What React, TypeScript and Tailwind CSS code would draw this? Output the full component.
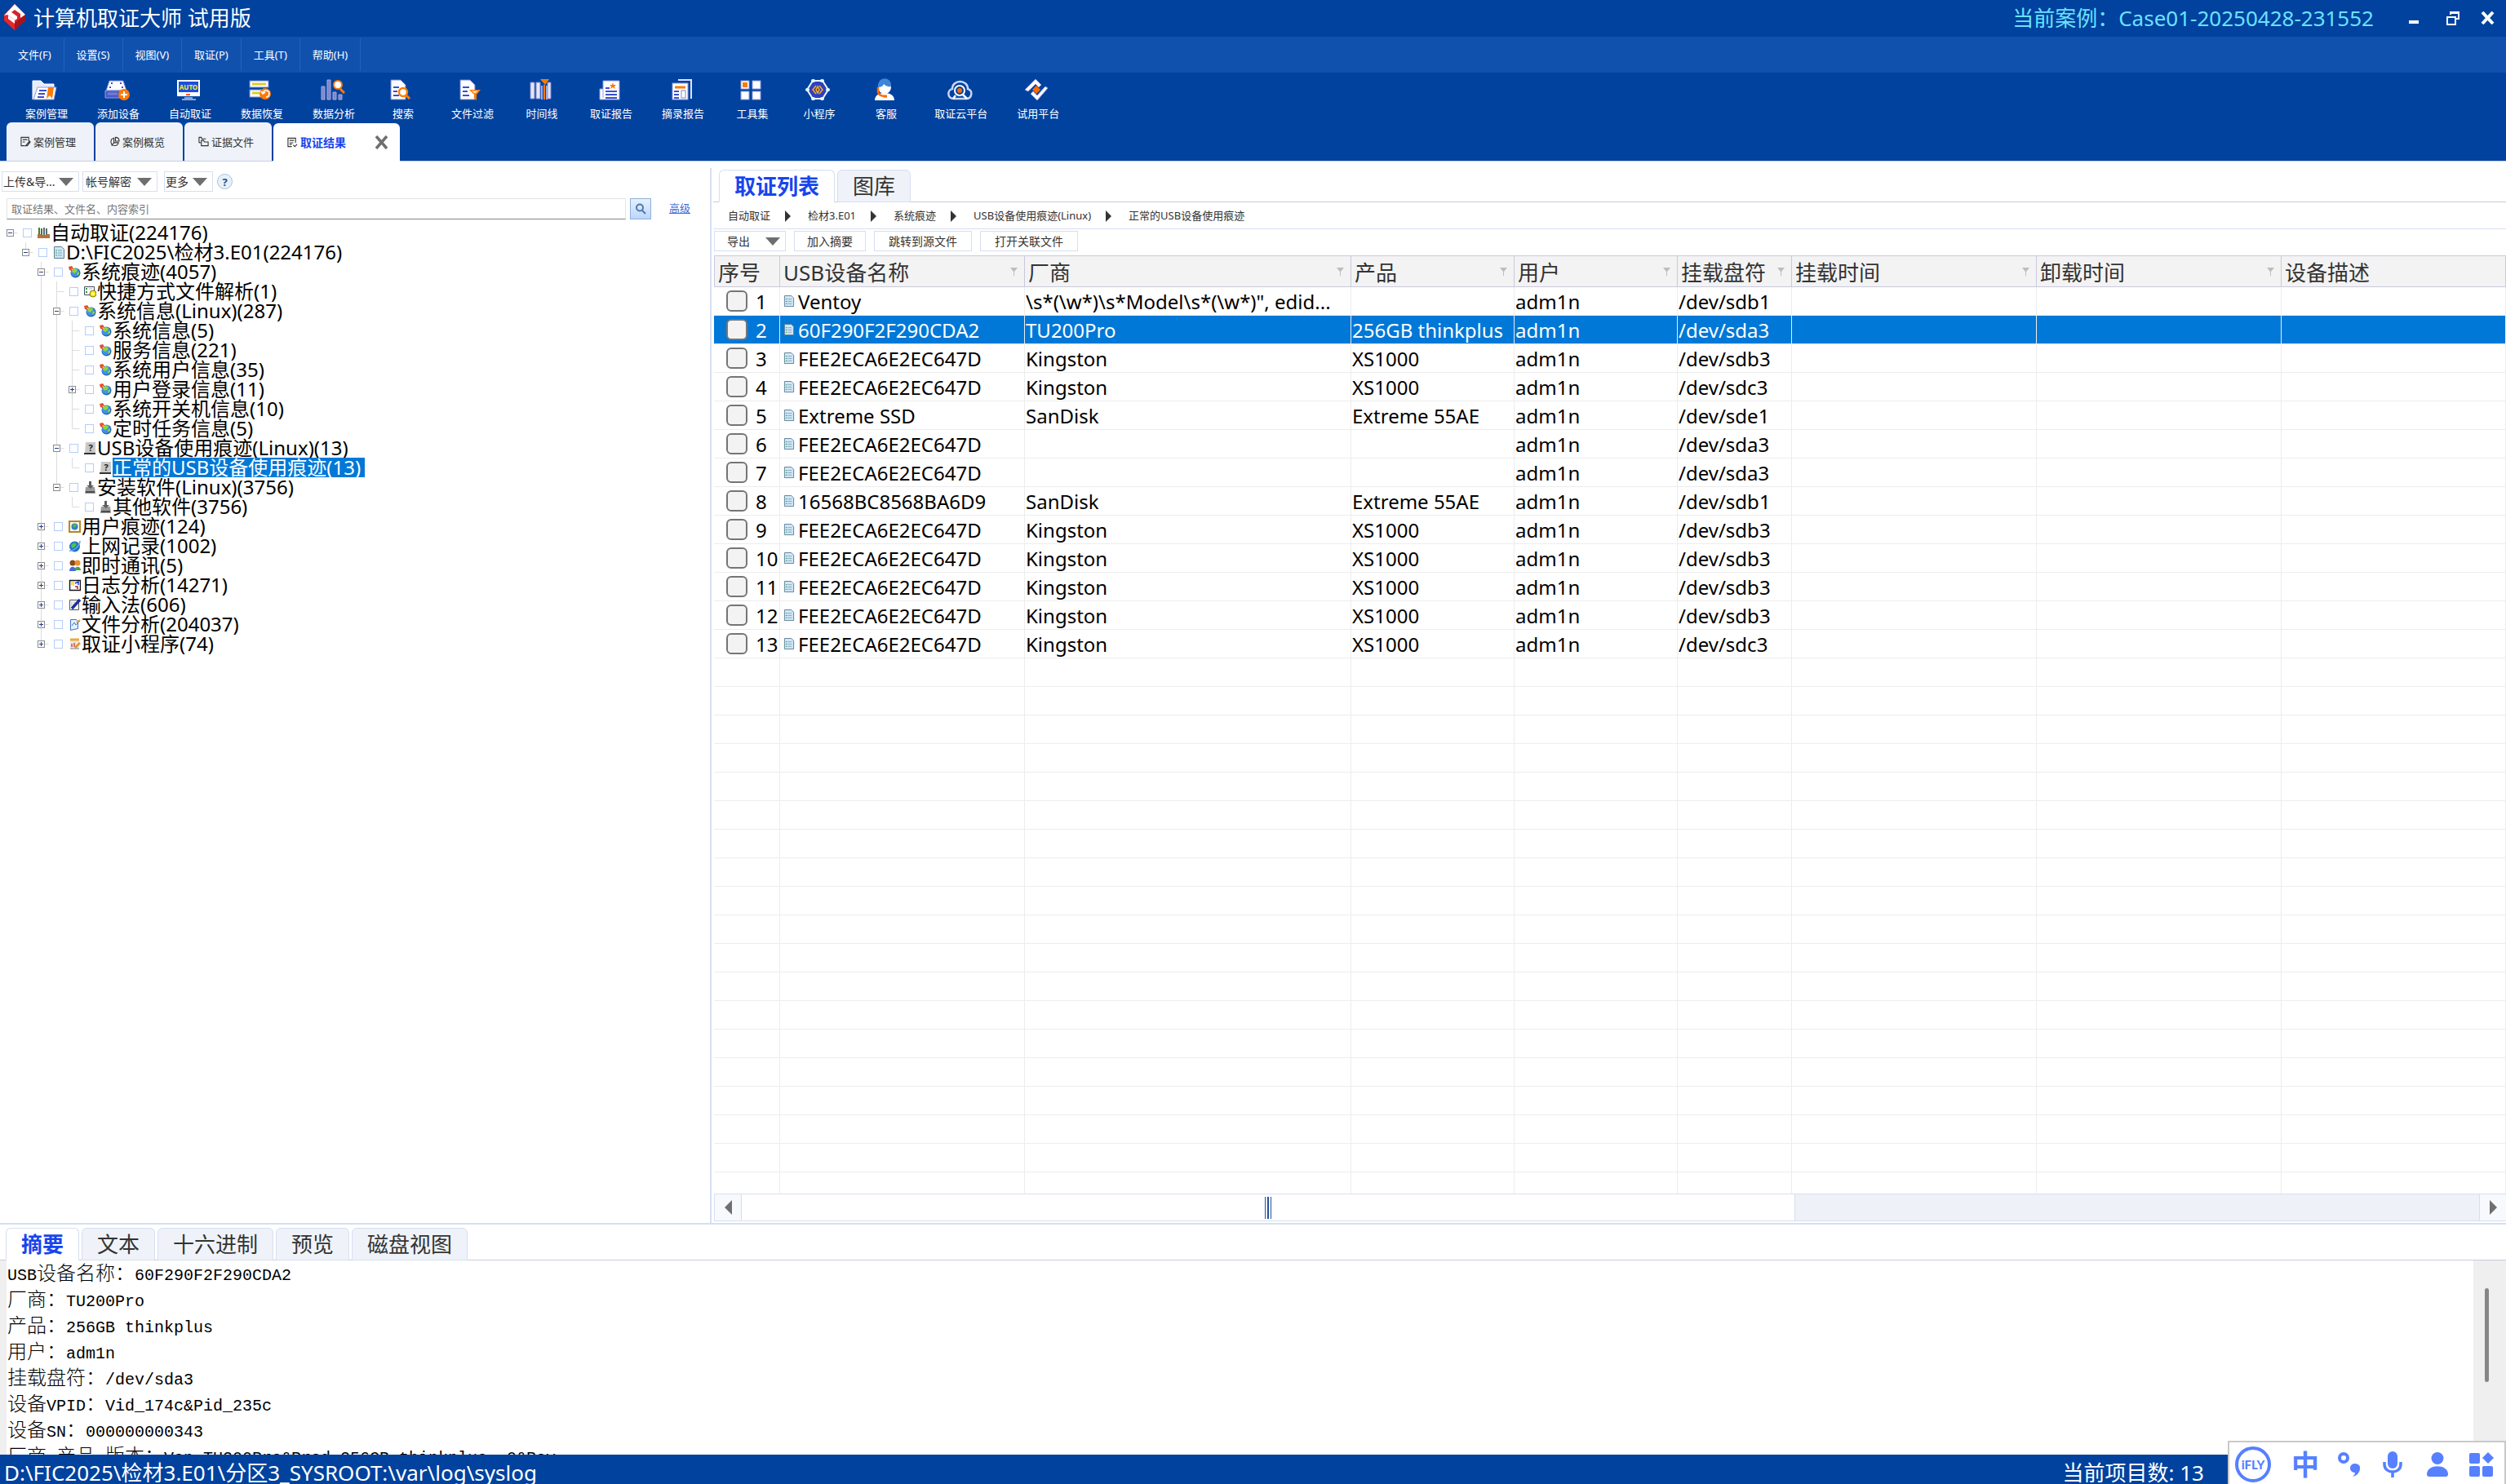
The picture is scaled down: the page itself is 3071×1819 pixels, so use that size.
import { Fragment } from 'react';
import type { ReactNode } from 'react';
import clsx from 'clsx';

const menus = ['文件(F)', '设置(S)', '视图(V)', '取证(P)', '工具(T)', '帮助(H)'];

/* ---------- toolbar ---------- */

const sheet = (
  <path d="M3 2h12l6 6v18H3z" fill="#fff" stroke="#6f7fd0" />
);

const toolIcons: Record<string, ReactNode> = {
  folder: (
    <>
      <path d="M1 26V3h10l4 4h12v5" fill="#e9ecfa" stroke="#fff" />
      <path d="M7 11h23l-3 15H2z" fill="#fff" stroke="#8f9be0" />
      <path d="M9 15h9M8 19h8M7 23h8" stroke="#3b4fd0" strokeWidth="2" />
      <path d="M20 11h7l-2 14-3-4-4 4z" fill="#ff7a00" />
    </>
  ),
  device: (
    <>
      <path d="M7 3h17l4 12H3z" fill="#fff" stroke="#6f7fd0" />
      <path d="M2 15h27v9H2z" fill="#4a5bc8" stroke="#8f9be0" />
      <path d="M5 19h12" stroke="#6f7fd0" strokeWidth="3" />
      <path d="M9 6h2M20 6h2M7 11h2M22 11h2" stroke="#3b4fd0" strokeWidth="2" />
      <circle cx="25" cy="20" r="7" fill="#ff7a00" />
      <path d="M25 16v8M21 20h8" stroke="#fff" strokeWidth="2" />
    </>
  ),
  auto: (
    <>
      <rect x="2" y="2" width="28" height="20" fill="#fff" />
      <rect x="4" y="4" width="24" height="13" fill="#1d4fe0" />
      <text x="16" y="14" textAnchor="middle" fontSize="8" fontWeight="700" fill="#f7ee2a">AUTO</text>
      <path d="M13 20h5" stroke="#ff5a00" strokeWidth="2" />
      <path d="M11 24h10M8 26h17" stroke="#b9c2f0" strokeWidth="1.4" />
    </>
  ),
  recover: (
    <>
      <rect x="3" y="3" width="23" height="8" fill="#fff" stroke="#6f7fd0" />
      <path d="M6 7h17" stroke="#d8cf2a" strokeWidth="3" />
      <rect x="3" y="14" width="15" height="9" fill="#fff" stroke="#6f7fd0" />
      <path d="M6 18h9" stroke="#d8cf2a" strokeWidth="3" />
      <circle cx="22" cy="19" r="7" fill="#ff7a00" />
      <path d="M19 18a4 4 0 1 1 4 5M17 16l2 3 3-2" fill="none" stroke="#fff" strokeWidth="1.6" />
    </>
  ),
  analyse: (
    <>
      <path d="M3 26V10h4v16zM10 26V2h4v24zM17 26v-9h4v9zM24 26v-6h4v6z" fill="#7e86cc" stroke="#a3a9e0" />
      <path d="M26 13l5 5" stroke="#ff7a00" strokeWidth="3" />
      <circle cx="23" cy="8" r="5" fill="#fff" stroke="#ff7a00" strokeWidth="2" />
    </>
  ),
  search: (
    <>
      {sheet}
      <path d="M6 11h7M6 16h5M6 21h7" stroke="#3b4fd0" strokeWidth="2" />
      <circle cx="18" cy="17" r="5" fill="#fff" stroke="#ff7a00" strokeWidth="2.4" />
      <path d="M22 21l4 4" stroke="#ff7a00" strokeWidth="3" />
    </>
  ),
  filter: (
    <>
      {sheet}
      <path d="M6 11h8M6 16h6M6 21h8" stroke="#3b4fd0" strokeWidth="2" />
      <path d="M14 14h14l-5 6v7l-3-2v-5z" fill="#ff7a00" />
      <path d="M17 15.500h8l-4 3z" fill="#ffe8d2" />
    </>
  ),
  timeline: (
    <>
      <path d="M4 5h5v20H4zM11 5h5v20h-5zM25 5h4v20h-4z" fill="#e4e6f6" stroke="#7e86cc" />
      <path d="M18 9v17M24 9v17" stroke="#a3a9e0" strokeWidth="2" />
      <path d="M21 8v18" stroke="#ff7a00" strokeWidth="2" />
      <path d="M16 1h11l-5 7z" fill="#ff7a00" />
    </>
  ),
  report: (
    <>
      <path d="M8 3h20v23H4V13h4z" fill="#fff" stroke="#8f9be0" />
      <path d="M8 13v11" stroke="#8f9be0" />
      <path d="M20 5l1 3h3l-2 2 1 3-3-2-3 2 1-3-2-2h3z" fill="#ff7a00" />
      <path d="M11 12h5M11 16h14M11 20h14M11 24h14" stroke="#3b4fd0" strokeWidth="2" />
    </>
  ),
  extract: (
    <>
      <path d="M12 2h16v23" fill="none" stroke="#dfe3fa" strokeWidth="2" />
      <rect x="5" y="6" width="19" height="20" fill="#fff" stroke="#8f9be0" />
      <path d="M8 11h13" stroke="#ff7a00" strokeWidth="3" />
      <path d="M7 16h6M7 20h6M7 24h6" stroke="#3b4fd0" strokeWidth="2" />
      <rect x="16" y="15" width="5" height="9" fill="#fff" stroke="#7e86cc" />
    </>
  ),
  tools: (
    <>
      <rect x="4" y="3" width="10" height="10" fill="#fff" stroke="#8f9be0" />
      <rect x="6" y="5" width="6" height="6" fill="#ff7a00" />
      <rect x="18" y="3" width="10" height="10" fill="#fff" stroke="#8f9be0" />
      <rect x="4" y="16" width="10" height="10" fill="#fff" stroke="#8f9be0" />
      <rect x="18" y="16" width="10" height="10" fill="#fff" stroke="#8f9be0" />
    </>
  ),
  applet: (
    <>
      <path d="M10 3h12l7 11-7 11H10L3 14z" fill="#2f3fc4" stroke="#e6fbff" strokeWidth="2" />
      <path d="M10 3h1M21 3h1M3 14h1M28 14h1M10 25h1M21 25h1" stroke="#e6fbff" strokeWidth="4" strokeLinecap="round" />
      <path d="M14 9l-4 5 4 5M18 9l4 5-4 5M16 10l-2 4 2 4 2-4z" fill="none" stroke="#ffb000" strokeWidth="1.5" />
    </>
  ),
  service: (
    <>
      <path d="M4 27c0-6 5-9 12-9s12 3 12 9z" fill="#fff" />
      <circle cx="16" cy="11" r="8" fill="#fff" />
      <path d="M8 11c-1-14 17-14 16-1-5 1-8-2-9-3-1 3-4 4-7 4z" fill="#3f86d8" />
      <path d="M8 11v6c1 4 5 5 9 5" fill="none" stroke="#ff6a00" strokeWidth="2.500" />
      <path d="M15 22h4" stroke="#ff6a00" strokeWidth="3" />
    </>
  ),
  cloud: (
    <>
      <path d="M9 25c-9 0-8-11-2-12 0-12 19-12 19 0 7 2 5 12-2 12z" fill="none" stroke="#c9d6f6" strokeWidth="2.500" />
      <circle cx="16" cy="15" r="6" fill="#00429e" stroke="#fff" strokeWidth="2" />
      <circle cx="16" cy="15" r="3" fill="#ff6a00" />
      <path d="M20 20l5 5M11 21l-3 4" stroke="#fff" strokeWidth="2.500" />
    </>
  ),
  trial: (
    <>
      <path d="M2 14L15 1l7 7-3 3-4-4-9 9z" fill="#fff" stroke="#8f9be0" />
      <path d="M30 12L17 27l-8-8 3-3 5 5 10-11z" fill="#fff" stroke="#8f9be0" />
      <path d="M16 9l5 5-5 5-5-5z" fill="#ff6a00" />
    </>
  ),
};

const tools = [
  { icon: 'folder', label: '案例管理' },
  { icon: 'device', label: '添加设备' },
  { icon: 'auto', label: '自动取证' },
  { icon: 'recover', label: '数据恢复' },
  { icon: 'analyse', label: '数据分析' },
  { icon: 'search', label: '搜索' },
  { icon: 'filter', label: '文件过滤' },
  { icon: 'timeline', label: '时间线' },
  { icon: 'report', label: '取证报告' },
  { icon: 'extract', label: '摘录报告' },
  { icon: 'tools', label: '工具集' },
  { icon: 'applet', label: '小程序' },
  { icon: 'service', label: '客服' },
  { icon: 'cloud', label: '取证云平台' },
  { icon: 'trial', label: '试用平台' },
];

/* ---------- page tabs ---------- */

const pageTabs = [
  { label: '案例管理', icon: <path d="M11 6V1H1v11h5M3 4h6M3 7h3M7 12l5-6 1 1-4 5z" /> },
  { label: '案例概览', icon: <path d="M6 2a5 5 0 1 0 6 6H6zM8 1v5h5c0-3-2-5-5-5zM6 8l-3 4" /> },
  { label: '证据文件', icon: <path d="M1 8V1h3l1 2h5M1 8h2M4 12V5h3l1 2h5v5z" /> },
  { label: '取证结果', icon: <path d="M11 7V1H1v11h5M3 4h6M3 7h5M3 9h3M8 10l2 2 3-3" /> },
];

/* ---------- evidence tree ---------- */

const treeIcons: Record<string, ReactNode> = {
  books: (
    <>
      <path d="M2 1v9M5 2v8" stroke="#3d7a3a" strokeWidth="2" />
      <path d="M8 1v9M11 2v8" stroke="#5b6b78" strokeWidth="2" />
      <path d="M0 9h4l1 1h5l1-1h4v5H0z" fill="#b5713a" />
    </>
  ),
  doc: (
    <>
      <path d="M1.500.5h9l3 3v11h-12z" fill="#cfe6f5" stroke="#5d7f9b" />
      <path d="M6 5h5M6 8h5M6 11h5" stroke="#7fa6c2" />
      <path d="M3 5h2M3 8h2M3 11h2" stroke="#3c9a4f" />
    </>
  ),
  globe: (
    <>
      <circle cx="8.500" cy="8.500" r="6" fill="#2468bd" />
      <circle cx="8" cy="8" r="5" fill="#3f92e6" />
      <path d="M4 7l3-4 4 1-1 3-3 2zM10 9l3-2 0 3-2 2z" fill="#8fd63a" />
      <path d="M0 1l4-1 2 3-2 3-3-1z" fill="#e0502a" />
      <path d="M3 3l3 1-1 2z" fill="#ffd23a" />
    </>
  ),
  shortcut: (
    <>
      <path d="M.5 1.500h12v10H.5z" fill="#fff" stroke="#444a66" />
      <path d="M2 4h2M2 8h2" stroke="#2c9a3a" strokeWidth="2" />
      <path d="M6 4h4" stroke="#8fb3ff" />
      <circle cx="11" cy="10" r="4" fill="#f5ea1c" stroke="#8b7d00" />
      <circle cx="11" cy="10" r="1.300" fill="#fff" />
    </>
  ),
  drive: (
    <>
      <path d="M2 0h12v14H1z" fill="#c9c9c9" />
      <path d="M0 14h14" stroke="#333" strokeWidth="2" />
      <text x="8" y="11" textAnchor="middle" fontSize="11" fontWeight="700" fill="#222">?</text>
    </>
  ),
  install: (
    <>
      <path d="M2 7h11l1 8H1z" fill="#9a9a9a" />
      <path d="M2 13h11" stroke="#4c4c4c" strokeWidth="2" />
      <path d="M6 0h3v5h3l-4 4-5-4h3z" fill="#5e5e5e" />
    </>
  ),
  user: (
    <>
      <rect x="1" y="1" width="13" height="13" fill="#fdf6d8" stroke="#b08a2c" strokeWidth="2" />
      <circle cx="7.500" cy="7.500" r="4" fill="#2f7fd6" />
      <path d="M5 6l3-2 2 2-3 3z" fill="#57b947" />
    </>
  ),
  web: (
    <>
      <circle cx="7.500" cy="8" r="6.500" fill="#1f74c9" />
      <path d="M3 6l4-3 3 2-3 4-3 1z" fill="#53c24b" />
      <path d="M1 13C5 14 14 8 14 1" fill="none" stroke="#66a9ee" strokeWidth="1.500" />
    </>
  ),
  people: (
    <>
      <circle cx="5" cy="4" r="3.500" fill="#8a4a1c" />
      <circle cx="11" cy="4" r="3.500" fill="#e8912c" />
      <path d="M1 14c0-7 8-7 8 0z" fill="#4a67d6" />
      <path d="M7 13c1-6 8-5 8 0z" fill="#3fa34a" />
    </>
  ),
  log: (
    <>
      <path d="M1.500 1.500h13v12h-13z" fill="#fff" stroke="#111" strokeWidth="1.400" />
      <path d="M4 3v4M6 3v5" stroke="#f2d21c" strokeWidth="1.500" />
      <path d="M8 5l4-2v4" fill="none" stroke="#1b3fd6" strokeWidth="1.500" />
      <path d="M8 9h3v3" fill="none" stroke="#c01c2c" strokeWidth="1.500" />
    </>
  ),
  pen: (
    <>
      <path d="M1.500 1.500h11v12h-11z" fill="#fff" stroke="#555" />
      <path d="M3 4h7M3 6h6M3 8h4" stroke="#999" strokeDasharray="1 1" />
      <path d="M4 12L14 1" stroke="#1b2fa6" strokeWidth="3.500" />
    </>
  ),
  analysis: (
    <>
      <path d="M2.500 1.500h7l2 2v9l-9 2z" fill="#e3f0ff" stroke="#3f74c4" />
      <path d="M4 9l3-4 2 3 5-5" fill="none" stroke="#3f74c4" />
      <path d="M10 5l4-3" stroke="#e8a02c" strokeWidth="2" />
    </>
  ),
  applet: (
    <>
      <path d="M2 2h11v12H2z" fill="#e6e6e6" />
      <path d="M2 2h11" stroke="#f0a83a" strokeWidth="3" />
      <path d="M4 7v4M7 6v5" stroke="#d6503a" strokeWidth="1.500" />
      <path d="M8 12l6-6" stroke="#e8912c" strokeWidth="2.500" />
      <path d="M2 13h11" stroke="#8d8d8d" />
    </>
  ),
};

type Toggle = 'minus' | 'plus' | null;

interface TreeNode {
  label: string;
  level: number;
  toggle: Toggle;
  icon: string;
  selected?: boolean;
}

const tree: TreeNode[] = [
  { label: '自动取证(224176)', level: 0, toggle: 'minus', icon: 'books' },
  { label: 'D:\\FIC2025\\检材3.E01(224176)', level: 1, toggle: 'minus', icon: 'doc' },
  { label: '系统痕迹(4057)', level: 2, toggle: 'minus', icon: 'globe' },
  { label: '快捷方式文件解析(1)', level: 3, toggle: null, icon: 'shortcut' },
  { label: '系统信息(Linux)(287)', level: 3, toggle: 'minus', icon: 'globe' },
  { label: '系统信息(5)', level: 4, toggle: null, icon: 'globe' },
  { label: '服务信息(221)', level: 4, toggle: null, icon: 'globe' },
  { label: '系统用户信息(35)', level: 4, toggle: null, icon: 'globe' },
  { label: '用户登录信息(11)', level: 4, toggle: 'plus', icon: 'globe' },
  { label: '系统开关机信息(10)', level: 4, toggle: null, icon: 'globe' },
  { label: '定时任务信息(5)', level: 4, toggle: null, icon: 'globe' },
  { label: 'USB设备使用痕迹(Linux)(13)', level: 3, toggle: 'minus', icon: 'drive' },
  { label: '正常的USB设备使用痕迹(13)', level: 4, toggle: null, icon: 'drive', selected: true },
  { label: '安装软件(Linux)(3756)', level: 3, toggle: 'minus', icon: 'install' },
  { label: '其他软件(3756)', level: 4, toggle: null, icon: 'install' },
  { label: '用户痕迹(124)', level: 2, toggle: 'plus', icon: 'user' },
  { label: '上网记录(1002)', level: 2, toggle: 'plus', icon: 'web' },
  { label: '即时通讯(5)', level: 2, toggle: 'plus', icon: 'people' },
  { label: '日志分析(14271)', level: 2, toggle: 'plus', icon: 'log' },
  { label: '输入法(606)', level: 2, toggle: 'plus', icon: 'pen' },
  { label: '文件分析(204037)', level: 2, toggle: 'plus', icon: 'analysis' },
  { label: '取证小程序(74)', level: 2, toggle: 'plus', icon: 'applet' },
];

// true when a later row on the same level still hangs off the same parent
const hasNext = (index: number, level: number) => {
  for (let i = index + 1; i < tree.length; i++) {
    if (tree[i].level === level) return true;
    if (tree[i].level < level) return false;
  }
  return false;
};

const Guide = ({ index, level }: { index: number; level: number }) => {
  const node = tree[index];
  const own = node.level === level;
  const next = hasNext(index, level);

  return (
    <svg width="19" height="24" viewBox="0 0 19 24" className="shrink-0" aria-hidden="true">
      {own && level > 0 && <path d="M9.500 0v12" stroke="#dcdcdc" />}
      {own && <path d="M9.500 12.500h9" stroke="#dcdcdc" />}
      {own && next && <path d="M9.500 12v12" stroke="#dcdcdc" />}
      {!own && next && <path d="M9.500 0v24" stroke="#dcdcdc" />}
      {own && node.toggle && (
        <>
          <rect x="5.500" y="8.500" width="8" height="8" fill="#fff" stroke="#8c8c8c" />
          <path d="M7 12.500h5" stroke="#24408e" />
          {node.toggle === 'plus' && <path d="M9.500 10v5" stroke="#24408e" />}
        </>
      )}
    </svg>
  );
};

const TreeRow = ({ index }: { index: number }) => {
  const node = tree[index];

  return (
    <li className="flex h-6 items-center pl-[3px]">
      {Array.from({ length: node.level + 1 }, (_, level) => (
        <Guide key={level} index={index} level={level} />
      ))}
      <label className="flex h-6 items-center">
        <input
          type="checkbox"
          className="ml-[6px] size-[11px] appearance-none border border-[#b5cdfb] bg-white"
        />
        <svg viewBox="0 0 15 15" className="ml-[7px] size-[15px]" aria-hidden="true">
          {treeIcons[node.icon]}
        </svg>
        <span
          className={clsx(
            'ml-px pr-[5px] text-2xl leading-6 whitespace-nowrap',
            node.selected ? 'bg-[#0078d7] text-white' : 'text-black'
          )}
        >
          {node.label}
        </span>
      </label>
    </li>
  );
};

/* ---------- result table ---------- */

const columns = [
  { label: '序号', width: 'w-[81px]', filter: false },
  { label: 'USB设备名称', width: 'w-[300px]', filter: true },
  { label: '厂商', width: 'w-[400px]', filter: true },
  { label: '产品', width: 'w-[200px]', filter: true },
  { label: '用户', width: 'w-[200px]', filter: true },
  { label: '挂载盘符', width: 'w-[140px]', filter: true },
  { label: '挂载时间', width: 'w-[300px]', filter: true },
  { label: '卸载时间', width: 'w-[300px]', filter: true },
  { label: '设备描述', width: '', filter: false },
];

// name, vendor, product, user, mount point
const devices = [
  ['Ventoy', '\\s*(\\w*)\\s*Model\\s*(\\w*)", edid...', '', 'adm1n', '/dev/sdb1'],
  ['60F290F2F290CDA2', 'TU200Pro', '256GB thinkplus', 'adm1n', '/dev/sda3'],
  ['FEE2ECA6E2EC647D', 'Kingston', 'XS1000', 'adm1n', '/dev/sdb3'],
  ['FEE2ECA6E2EC647D', 'Kingston', 'XS1000', 'adm1n', '/dev/sdc3'],
  ['Extreme SSD', 'SanDisk', 'Extreme 55AE', 'adm1n', '/dev/sde1'],
  ['FEE2ECA6E2EC647D', '', '', 'adm1n', '/dev/sda3'],
  ['FEE2ECA6E2EC647D', '', '', 'adm1n', '/dev/sda3'],
  ['16568BC8568BA6D9', 'SanDisk', 'Extreme 55AE', 'adm1n', '/dev/sdb1'],
  ['FEE2ECA6E2EC647D', 'Kingston', 'XS1000', 'adm1n', '/dev/sdb3'],
  ['FEE2ECA6E2EC647D', 'Kingston', 'XS1000', 'adm1n', '/dev/sdb3'],
  ['FEE2ECA6E2EC647D', 'Kingston', 'XS1000', 'adm1n', '/dev/sdb3'],
  ['FEE2ECA6E2EC647D', 'Kingston', 'XS1000', 'adm1n', '/dev/sdb3'],
  ['FEE2ECA6E2EC647D', 'Kingston', 'XS1000', 'adm1n', '/dev/sdc3'],
];

const selectedRow = 1;
const emptyRows = Array.from({ length: 30 }, (_, i) => i);
const cell = 'h-[35px] overflow-hidden border-r border-b border-[#ededed] p-0 text-2xl leading-8 whitespace-nowrap';

const FilterMark = () => (
  <svg width="9" height="10" viewBox="0 0 9 10" className="shrink-0" aria-hidden="true">
    <path d="M0 0h9L5 5v5H4V5z" fill="#bdbdbd" />
  </svg>
);

const ResultTable = () => (
  <table className="w-full table-fixed border-separate border-spacing-0">
    <thead>
      <tr className="h-[39px] bg-[#f3f3f3]">
        {columns.map((col, i) => (
          <th
            key={col.label}
            className={clsx(
              'border-y border-r border-[#c9cadc] p-0 text-left font-normal text-[#333]',
              i === 0 && 'border-l',
              col.width
            )}
          >
            <div className="flex h-[37px] items-center justify-between pr-2 pl-1">
              <span className="pt-[2px] text-[26px] leading-9 whitespace-nowrap">{col.label}</span>
              {col.filter && <FilterMark />}
            </div>
          </th>
        ))}
      </tr>
    </thead>
    <tbody>
      {devices.map((row, i) => (
        <tr key={i} className={i === selectedRow ? 'bg-[#0078d7] text-white' : 'text-black'}>
          <td className={cell}>
            <label className="flex items-center pl-[15px]">
              <input
                type="checkbox"
                className="size-[26px] shrink-0 appearance-none rounded-md border-2 border-[#757575] bg-[#f3f3f3]"
              />
              <span className="pt-[2px] pl-[10px]">{i + 1}</span>
            </label>
          </td>
          <td className={cell}>
            <div className="flex items-center pl-1">
              <svg width="14" height="17" viewBox="0 0 15 16" className="mr-1 shrink-0" aria-hidden="true">
                {treeIcons.doc}
              </svg>
              <span className="pt-[2px]">{row[0]}</span>
            </div>
          </td>
          {[1, 2, 3, 4].map((n) => (
            <td key={n} className={cell}>
              <div className="pt-[2px] pl-px">{row[n]}</div>
            </td>
          ))}
          <td className={cell} />
          <td className={cell} />
          <td className={cell} />
        </tr>
      ))}
      {emptyRows.map((i) => (
        <tr key={i} className="h-[35px]">
          {columns.map((col) => (
            <td key={col.label} className="border-r border-b border-[#ededed] p-0" />
          ))}
        </tr>
      ))}
    </tbody>
  </table>
);

/* ---------- detail panel ---------- */

const details = [
  'USB设备名称：60F290F2F290CDA2',
  '厂商：TU200Pro',
  '产品：256GB thinkplus',
  '用户：adm1n',
  '挂载盘符：/dev/sda3',
  '设备VPID：Vid_174c&Pid_235c',
  '设备SN：000000000343',
  '厂商_产品_版本：Ven_TU200Pro&Prod_256GB_thinkplus__0&Rev_',
];

// half-width runs are set smaller so that two of them fill one full-width cell
const DetailLine = ({ text }: { text: string }) => (
  <p className="h-8 leading-[30px] whitespace-pre">
    {text.split(/([\x20-\x7e]+)/).map((part, i) => (
      <span
        key={i}
        className={
          i % 2
            ? 'font-["Liberation_Mono",monospace] text-xl leading-[30px]'
            : 'text-2xl leading-[30px] font-light'
        }
      >
        {part}
      </span>
    ))}
  </p>
);

/* ---------- small shared parts ---------- */

const CaretDown = () => (
  <svg width="18" height="10" viewBox="0 0 18 10" aria-hidden="true">
    <path d="M0 0h18L9 10z" fill="#6f6f6f" />
  </svg>
);

interface PanelTabsProps {
  tabs: string[];
}

const PanelTabs = ({ tabs }: PanelTabsProps) => (
  <div className="flex h-10 gap-[3px] border-b border-[#c9cadc] pl-[7px]" role="tablist">
    {tabs.map((tab, i) => (
      <button
        key={tab}
        role="tab"
        aria-selected={i === 0}
        className={clsx(
          '-mb-px h-10 rounded-t-md border border-[#d6dff0] px-[18px] text-[26px] leading-9',
          i === 0 ? 'border-b-white bg-white font-bold text-[#1745ee]' : 'bg-[#eff3f9] text-[#333]'
        )}
      >
        {tab}
      </button>
    ))}
  </div>
);

const crumbs = ['自动取证', '检材3.E01', '系统痕迹', 'USB设备使用痕迹(Linux)', '正常的USB设备使用痕迹'];

const Header = () => (
  <header className="bg-[#00429e] text-white">
    <div className="flex h-[45px] items-center pl-[5px]">
      <svg width="26" height="32" viewBox="0 0 26 32" className="-mt-1" aria-hidden="true">
        <path d="M13 0l13 13v7L13 32 0 20v-7z" fill="#d8232a" />
        <path d="M13 12v20L0 20v-7l6-3z" fill="#e8262c" />
        <path d="M13 0l13 13-6 4v-5l-7-5-4 3 7 5v3l-3 2-9-7-4 1z" fill="#fff" />
        <path d="M5 14l8 6v4l-8-6z" fill="#fff" />
        <path d="M26 13v7L13 32v-9z" fill="#a3161c" />
      </svg>
      <h1 className="ml-[10px] text-[26px] leading-[45px]">计算机取证大师 试用版</h1>
      <p className="ml-auto text-[26px] leading-[45px] text-[#6be1ff]">当前案例：Case01-20250428-231552</p>
      <div className="ml-[43px] flex h-10 items-center gap-[34px] pr-[14px]">
        <button aria-label="最小化">
          <svg width="12" height="18" viewBox="0 0 12 18">
            <path d="M0 11h12v4H0z" fill="#fff" />
          </svg>
        </button>
        <button aria-label="还原">
          <svg width="16" height="18" viewBox="0 0 16 18">
            <path d="M5 4V1h10v8h-4" fill="none" stroke="#fff" strokeWidth="2" />
            <path d="M4 1h12" stroke="#fff" strokeWidth="4" />
            <path d="M1 7h10v9H1z" fill="#00429e" stroke="#fff" strokeWidth="2" />
          </svg>
        </button>
        <button aria-label="关闭" className="-ml-2">
          <svg width="17" height="18" viewBox="0 0 17 18">
            <path d="M2 1l13 14M15 1L2 15" stroke="#fff" strokeWidth="4" />
          </svg>
        </button>
      </div>
    </div>

    <nav className="flex h-11 bg-[#1151ae] py-[2px]">
      {menus.map((menu, i) => (
        <button
          key={menu}
          className={clsx(
            'h-10 border-r border-[#1d63c2] pt-px pr-[15px] text-[13px]',
            i === 0 ? 'pl-[22px]' : 'pl-[15px]'
          )}
        >
          {menu}
        </button>
      ))}
    </nav>

    <div className="flex h-[61px] pl-[13px]">
      {tools.map((tool) => (
        <button key={tool.label} className="flex min-w-[82px] flex-col items-center px-[18px] pt-[7px]">
          <svg width="32" height="28" viewBox="0 0 32 28" className="mr-1 shrink-0" aria-hidden="true">
            {toolIcons[tool.icon]}
          </svg>
          <span className="mt-[5px] text-[13px] leading-5 whitespace-nowrap">{tool.label}</span>
        </button>
      ))}
    </div>

    <div className="flex h-12 items-end gap-[2px] border-b border-[#c9cde6] pl-2" role="tablist">
      {pageTabs.map((tab, i) => {
        const active = i === 3;
        return (
          <div
            key={tab.label}
            className={clsx(
              'flex h-[47px] items-center rounded-t-md',
              active ? '-mb-px h-12 w-[155px] bg-white' : 'w-[107px] bg-[#eff3f9]'
            )}
          >
            <button role="tab" aria-selected={active} className="flex items-center gap-[3px] pl-[17px]">
              <svg width="13" height="13" viewBox="0 0 14 13" fill="none" stroke="#333" strokeWidth="1.2" aria-hidden="true">
                {tab.icon}
              </svg>
              <span
                className={clsx(
                  'leading-5 whitespace-nowrap',
                  active ? 'text-sm font-bold text-[#1745ee]' : 'text-[13px] text-[#333]'
                )}
              >
                {tab.label}
              </span>
            </button>
            {active && (
              <button aria-label="关闭标签" className="mr-[14px] ml-auto">
                <svg width="17" height="17" viewBox="0 0 17 17">
                  <path d="M2 1l13 15M15 1L2 16" stroke="#6f6f6f" strokeWidth="3.500" />
                </svg>
              </button>
            )}
          </div>
        );
      })}
    </div>
  </header>
);

const LeftPanel = () => (
  <aside className="flex w-[870px] shrink-0 flex-col overflow-hidden">
    <div className="flex h-[25px] items-center pl-[2px] text-sm text-[#333]">
      <button className="flex h-[25px] w-[95px] items-center justify-between border border-[#d6dff0] pr-[6px] pl-px">
        上传&amp;导...
        <CaretDown />
      </button>
      <button className="ml-1 flex h-[25px] w-[92px] items-center justify-between border border-[#d6dff0] pr-[6px] pl-[3px]">
        帐号解密
        <CaretDown />
      </button>
      <button className="ml-2 flex h-[25px] w-[60px] items-center justify-between border border-[#d6dff0] pr-[6px] pl-px">
        更多
        <CaretDown />
      </button>
      <button className="ml-[5px] size-[19px] rounded-full border border-[#a9c3dc] bg-[#e8f0f8] text-[13px] leading-4 font-bold text-[#1d4f91]">
        ?
      </button>
    </div>

    <div className="mt-2 flex h-[26px] items-center pl-2">
      <input
        type="text"
        aria-label="搜索"
        placeholder="取证结果、文件名、内容索引"
        className="h-[26px] min-w-0 flex-1 border border-[#e4e4e4] border-b-[#858585] px-[5px] text-[13px] placeholder:text-[#777]"
      />
      <button
        aria-label="查找"
        className="ml-[5px] flex h-[26px] w-[26px] items-center justify-center border border-[#8fb0dc] bg-linear-to-b from-[#e6f0fd] to-[#bdd7fb]"
      >
        <svg width="14" height="14" viewBox="0 0 14 14" fill="none" stroke="#4f78ad" strokeWidth="2" aria-hidden="true">
          <circle cx="6" cy="5.500" r="4" />
          <path d="M9 9l4 4" />
        </svg>
      </button>
      <a href="#" className="mr-6 ml-[22px] text-[13px] text-[#3f6fd8] underline">
        高级
      </a>
    </div>

    <ul className="mt-1">
      {tree.map((node, i) => (
        <TreeRow key={node.label} index={i} />
      ))}
    </ul>
  </aside>
);

const RightPanel = () => (
  <section className="flex min-w-0 flex-1 flex-col border-l-2 border-[#d6dff0] pl-[2px]">
    <div className="mt-[2px]">
      <PanelTabs tabs={['取证列表', '图库']} />
    </div>

    <nav className="flex h-[33px] shrink-0 items-center border-b border-[#d6dff0] pt-[2px] pl-[18px] text-[13px] text-[#333]">
      {crumbs.map((crumb, i) => (
        <Fragment key={crumb}>
          {i > 0 && (
            <svg width="7" height="14" viewBox="0 0 7 14" className="mr-[21px] ml-[18px]" aria-hidden="true">
              <path d="M0 0l7 7-7 7z" fill="#333" />
            </svg>
          )}
          <a href="#">{crumb}</a>
        </Fragment>
      ))}
    </nav>

    <div className="flex h-8 shrink-0 gap-[10px] pt-[2px] pl-px text-sm text-[#333]">
      <button className="flex h-[25px] w-[88px] items-center justify-between border border-[#d6dff0] pr-[6px] pl-[15px]">
        导出
        <CaretDown />
      </button>
      <button className="h-[25px] border border-[#d6dff0] px-[15px]">加入摘要</button>
      <button className="h-[25px] border border-[#d6dff0] px-[17px]">跳转到源文件</button>
      <button className="h-[25px] border border-[#d6dff0] px-[17px]">打开关联文件</button>
    </div>

    <div className="min-h-0 flex-1 overflow-hidden pl-px">
      <ResultTable />
    </div>

    <div className="mb-[2px] ml-px flex h-[34px] shrink-0 border-y border-[#d6dff0] bg-[#eef1f7]">
      <button aria-label="向左滚动" className="flex w-[34px] items-center justify-center border-x border-[#d6dff0] bg-[#f7f9fc]">
        <svg width="9" height="18" viewBox="0 0 9 18">
          <path d="M9 0v18L0 9z" fill="#6f6f6f" />
        </svg>
      </button>
      <div className="flex flex-20 items-center justify-center gap-[2px] border-r border-[#d6dff0] bg-white">
        <span className="h-[27px] w-px bg-[#24509e]" />
        <span className="h-[27px] w-[2px] bg-[#24509e]" />
        <span className="h-[27px] w-px bg-[#24509e]" />
      </div>
      <div className="flex-13" />
      <button aria-label="向右滚动" className="flex w-[33px] items-center justify-center border-l border-[#d6dff0] bg-[#f7f9fc]">
        <svg width="9" height="18" viewBox="0 0 9 18">
          <path d="M0 0v18l9-9z" fill="#6f6f6f" />
        </svg>
      </button>
    </div>
  </section>
);

const DetailPanel = () => (
  <section className="flex h-[284px] shrink-0 flex-col border-t-2 border-[#d6dff0]">
    <div className="mt-1 shrink-0">
      <PanelTabs tabs={['摘要', '文本', '十六进制', '预览', '磁盘视图']} />
    </div>
    <div className="flex min-h-0 flex-1 bg-[#efefef] pl-2">
      <div className="min-w-0 flex-1 overflow-hidden bg-white pl-px text-black">
        {details.map((line) => (
          <DetailLine key={line} text={line} />
        ))}
      </div>
      <div className="w-10 pt-[34px] pl-[14px]">
        <div className="h-[115px] w-[5px] rounded-full bg-[#868686]" />
      </div>
    </div>
  </section>
);

const ImeBar = () => (
  <div className="absolute right-0 bottom-0 flex h-[53px] w-[341px] items-center border-2 border-b-0 border-[#c9c9c9] bg-white pt-[3px] pl-[7px] text-[#5680ff]">
    <button className="flex size-11 items-center justify-center rounded-full border-4 border-[#5680ff] font-[Lato,sans-serif] text-[15px] font-black">
      iFLY
    </button>
    <button className="ml-[25px] text-[34px] leading-10 font-bold">中</button>
    <svg width="28" height="32" viewBox="0 0 28 32" className="ml-[23px]" aria-hidden="true">
      <circle cx="7" cy="8" r="5" fill="none" stroke="#5680ff" strokeWidth="4" />
      <path d="M21 15a6 5 0 0 1 6 6c0 5-4 9-9 10 2-2 3-3 3-5-8 0-8-11 0-11z" fill="#5680ff" />
    </svg>
    <svg width="24" height="32" viewBox="0 0 24 32" className="ml-[27px]" aria-hidden="true">
      <rect x="6" y="0" width="12" height="21" rx="6" fill="#5680ff" />
      <path d="M2 13v3c0 12 20 12 20 0v-3M12 25v7" fill="none" stroke="#5680ff" strokeWidth="3.500" />
    </svg>
    <svg width="26" height="30" viewBox="0 0 26 30" className="ml-[30px]" aria-hidden="true">
      <circle cx="13" cy="7.500" r="7.500" fill="#5680ff" />
      <path d="M0 27c0-13 26-13 26 0 0 2-1 3-3 3H3c-2 0-3-1-3-3z" fill="#5680ff" />
    </svg>
    <svg width="30" height="30" viewBox="0 0 30 30" className="ml-[26px]" aria-hidden="true">
      <rect x="0" y="1" width="13" height="13" rx="2" fill="#5680ff" />
      <rect x="0" y="17" width="13" height="13" rx="2" fill="#5680ff" />
      <rect x="16" y="17" width="13" height="13" rx="2" fill="#5680ff" />
      <path d="M23 0l7 7-7 7-7-7z" fill="#5680ff" />
    </svg>
  </div>
);

const App = () => {
  return (
    <div className='relative flex h-screen flex-col overflow-hidden bg-white font-["Noto_Sans","Noto_Sans_CJK_SC",sans-serif]'>
      <Header />
      <main className="flex min-h-0 flex-1 pt-2">
        <div className="flex pt-1">
          <LeftPanel />
        </div>
        <RightPanel />
      </main>
      <DetailPanel />
      <footer className="flex h-9 shrink-0 items-start justify-between overflow-hidden bg-[#00429e] pr-[370px] pl-[5px] text-[26px] leading-[44px] text-white">
        <span>D:\FIC2025\检材3.E01\分区3_SYSROOT:\var\log\syslog</span>
        <span>当前项目数: 13</span>
      </footer>
      <ImeBar />
    </div>
  );
};

export default App;
